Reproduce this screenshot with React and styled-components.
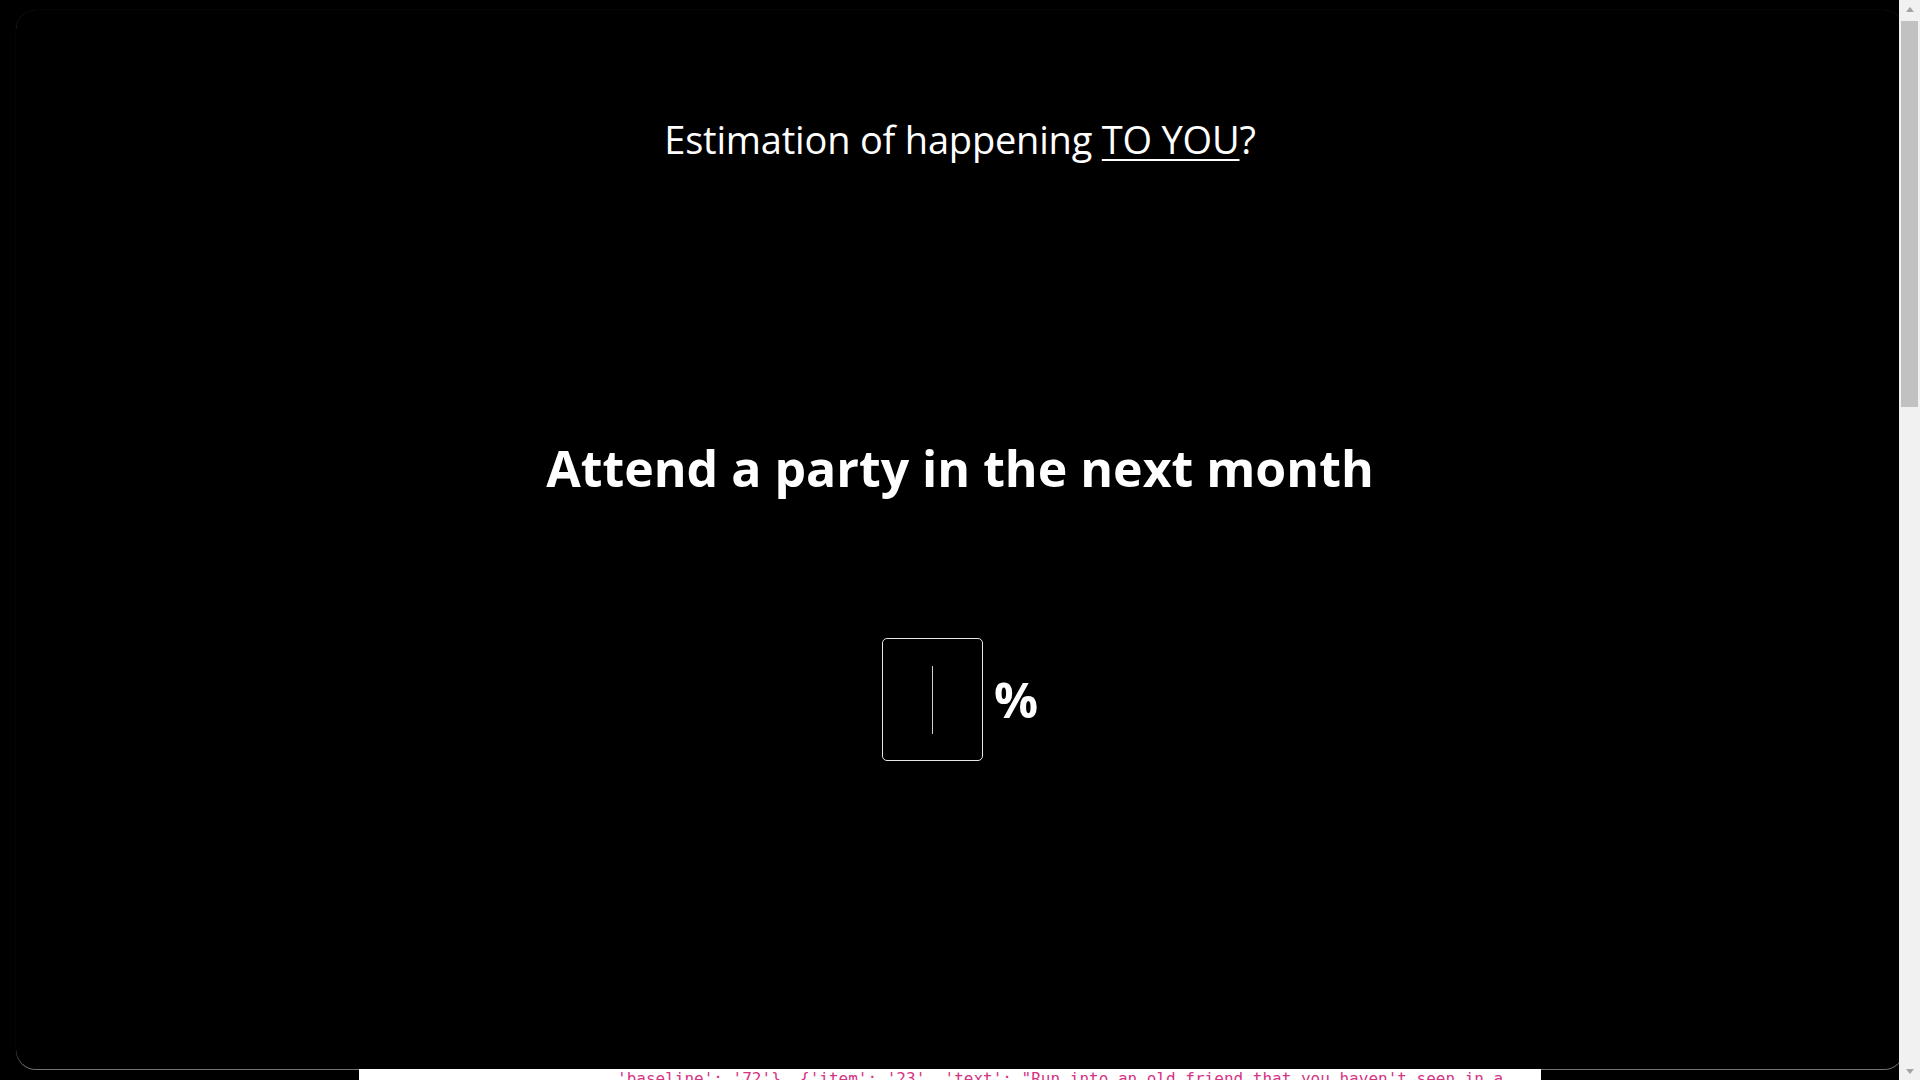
import React from "react";
import styled, { createGlobalStyle } from "styled-components";

const GlobalStyle = createGlobalStyle`
  html, body {
    margin: 0;
    padding: 0;
    background: #000;
  }
  body {
    font-family: "Open Sans", "Noto Sans", sans-serif;
    color: #fff;
  }
`;

const Panel = styled.section`
  margin: 10px 16px 0;
  height: 1059px;
  box-sizing: border-box;
  background: #000;
  border-radius: 20px;
  box-shadow: 0 1px 0 #727272, 0 0 1px rgba(255, 255, 255, 0.2);
  display: flex;
  flex-direction: column;
  align-items: center;
`;

const Title = styled.h2`
  margin: 107px 0 0;
  font-size: 38px;
  font-weight: 400;
  line-height: 1.2;
  letter-spacing: -0.2px;
`;

const Emph = styled.span`
  text-decoration: underline;
  text-decoration-thickness: 2px;
  text-underline-offset: 5px;
`;

const Question = styled.h1`
  margin: 275px 0 0;
  font-size: 50px;
  font-weight: 700;
  line-height: 1.2;
`;

const AnswerRow = styled.div`
  margin-top: 140px;
  display: flex;
  align-items: center;
  gap: 11px;
`;

const InputBox = styled.div`
  position: relative;

  &::after {
    content: "";
    position: absolute;
    left: 50px;
    top: 28px;
    width: 1px;
    height: 68px;
    background: #cfcfcf;
    pointer-events: none;
  }
`;

const PercentInput = styled.input`
  display: block;
  width: 101px;
  height: 123px;
  box-sizing: border-box;
  background: #000;
  color: #fff;
  caret-color: transparent;
  border: 1px solid #e6e6e6;
  border-radius: 5px;
  font-family: "Open Sans", sans-serif;
  font-size: 50px;
  text-align: center;
  outline: none;
  padding: 0;
`;

const Percent = styled.span`
  font-size: 49px;
  font-weight: 700;
  line-height: 1;
`;

const Output = styled.div`
  width: 1182px;
  min-height: 1835px;
  margin-left: calc(50% - 601px);
  background: #fff;
  box-sizing: border-box;
  padding: 0 30px 0 258px;
`;

const Code = styled.code`
  display: block;
  font-family: "DejaVu Sans Mono", "Liberation Mono", monospace;
  font-size: 16px;
  line-height: 1.2;
  color: #d63384;
  word-wrap: break-word;
`;

/* browser scrollbar, drawn over the right edge */
const ScrollBar = styled.div`
  position: fixed;
  top: 0;
  right: 0;
  bottom: 0;
  width: 21px;
  background: #f1f1f1;
  display: flex;
  flex-direction: column;
`;

const ScrollButton = styled.div`
  height: 21px;
  flex: none;
  display: flex;
  align-items: center;
  justify-content: center;

  &::before {
    content: "";
    width: 0;
    height: 0;
    border-left: 4.5px solid transparent;
    border-right: 4.5px solid transparent;
    ${(p) =>
      p.$down
        ? "border-top: 5px solid #a3a3a3; margin-top: 3px;"
        : "border-bottom: 5px solid #a3a3a3; margin-top: -2px;"}
  }
`;

const ScrollTrack = styled.div`
  flex: 1;
  padding: 0 2px;
`;

const ScrollThumb = styled.div`
  height: 386px;
  background: #c1c1c1;
`;

const items = [
  ["24", "Get a promotion at work within the next two years", "38"],
  ["25", "Travel abroad in the next twelve months", "52"],
  ["26", "Win a prize in a raffle or lottery this year", "12"],
  ["27", "Catch a cold in the next six months", "67"],
];

export default function App() {
  const dump = items
    .map(([id, text, base]) => `{'item': '${id}', 'text': "${text}", 'baseline': '${base}'}`)
    .join(", ");

  return (
    <>
      <GlobalStyle />
      <Panel>
        <Title>
          Estimation of happening <Emph>TO YOU</Emph>?
        </Title>
        <Question>Attend a party in the next month</Question>
        <AnswerRow>
          <InputBox>
            <PercentInput type="text" autoFocus />
          </InputBox>
          <Percent>%</Percent>
        </AnswerRow>
      </Panel>
      <Output>
        <Code>
          'baseline': '72'{"}"}, {"{"}'item': '23', 'text': "Run into an old friend that you haven't seen in a
          year", 'baseline': '41'{"}"}, {dump}
        </Code>
      </Output>
      <ScrollBar>
        <ScrollButton />
        <ScrollTrack>
          <ScrollThumb />
        </ScrollTrack>
        <ScrollButton $down />
      </ScrollBar>
    </>
  );
}
